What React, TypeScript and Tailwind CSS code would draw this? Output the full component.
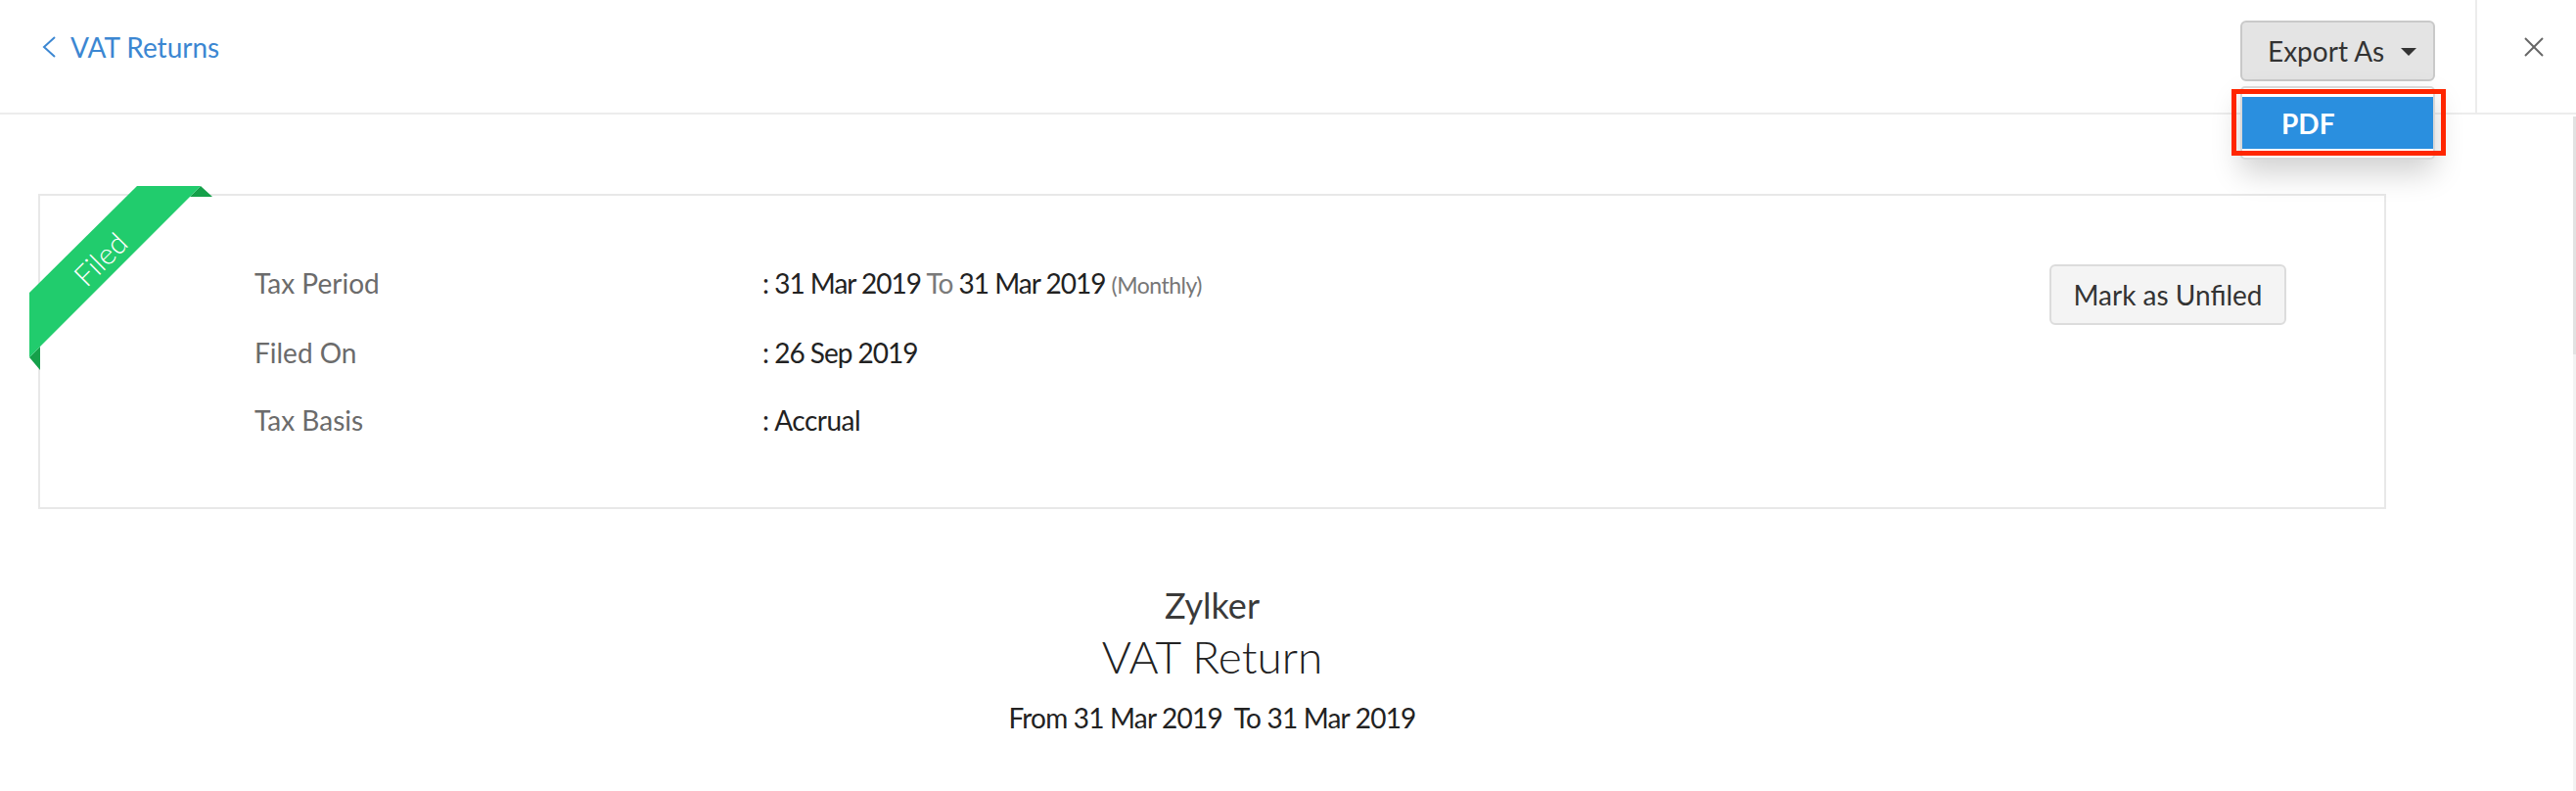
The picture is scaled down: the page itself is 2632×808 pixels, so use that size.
import React from "react";

function Ribbon() {
  return (
    <svg
      className="absolute left-[-11px] top-[-10px]"
      width="200"
      height="200"
      viewBox="0 0 200 200"
    >
      <polygon points="175,0 187,11 164,11" fill="#15a04a" />
      <polygon points="0,175 11,164 11,188" fill="#15a04a" />
      <polygon points="110,0 175,0 0,175 0,109" fill="#21cc6d" />
      <text
        x="72"
        y="74"
        fill="#ffffff"
        fontSize="30"
        fontWeight="300"
        fontFamily="Lato, 'Open Sans', sans-serif"
        textAnchor="middle"
        dominantBaseline="central"
        transform="rotate(-45 72 74)"
      >
        Filed
      </text>
    </svg>
  );
}

export default function App() {
  return (
    <div
      className="relative w-full min-h-[808px] bg-white text-[#222]"
      style={{ fontFamily: "Lato, 'Open Sans', 'Liberation Sans', sans-serif" }}
    >
      {/* Header */}
      <div className="flex h-[117px] items-start justify-between border-b-2 border-[#ececec]">
        <div className="mt-[17px] flex h-[62px] items-center pl-[43px] text-[28px] text-[#3c87d2]">
          <svg width="15" height="22" viewBox="0 0 15 22" className="mr-[14px]">
            <polyline
              points="13,1 2,11 13,21"
              fill="none"
              stroke="#3c87d2"
              strokeWidth="2"
            />
          </svg>
          <span className="leading-none">VAT Returns</span>
        </div>
        <div className="flex h-full items-start">
          <div className="relative mr-[41px] mt-[21px]">
            <button className="flex h-[62px] w-[199px] items-center rounded-[6px] border-2 border-[#c9c9c9] bg-[#e4e4e4] pl-[26px] text-[28px] text-[#333]">
              <span>Export As</span>
              <svg width="16" height="8" viewBox="0 0 16 8" className="ml-[17px] mt-[2px]">
                <polygon points="0,0 16,0 8,8" fill="#333" />
              </svg>
            </button>
            {/* Dropdown */}
            <div className="absolute left-0 top-[67px] z-10 h-[75px] w-[199px] rounded-[5px] border-2 border-[#d8d8d8] bg-white pt-[9px] shadow-[0_14px_30px_rgba(0,0,0,0.18)]">
              <div className="flex h-[53px] items-center bg-[#2a8fdf] pl-[40px] text-[28px] font-bold text-white">
                PDF
              </div>
            </div>
            <div className="absolute left-[-9px] top-[70px] z-20 h-[68px] w-[219px] border-[5px] border-[#ff2600]" />
          </div>
          <div className="h-full w-[103px] border-l-2 border-[#ececec] pl-[47px] pt-[37px]">
            <svg width="22" height="22" viewBox="0 0 22 22">
              <line x1="2" y1="2" x2="20" y2="20" stroke="#666" strokeWidth="2" />
              <line x1="20" y1="2" x2="2" y2="20" stroke="#666" strokeWidth="2" />
            </svg>
          </div>
        </div>
      </div>

      {/* Scrollbar hint */}
      <div className="absolute right-0 top-[119px] h-[243px] w-[3px] bg-[#e2e2e2]" />
      <div className="absolute right-0 top-[362px] h-[446px] w-[3px] bg-[#f2f2f2]" />

      {/* Card */}
      <div className="relative ml-[39px] mt-[81px] h-[322px] w-[2399px] border-2 border-[#e8e8e8]">
        <Ribbon />
        <div className="flex justify-between pl-[219px] pr-[100px] pt-[69px]">
          <div className="flex flex-col gap-[29px] text-[28px] leading-[40px]">
            <div className="flex">
              <div className="w-[519px] text-[#6b6b6b]">Tax Period</div>
              <div className="tracking-[-1px] text-[#222]">
                : 31 Mar 2019 <span className="text-[#7a7a7a]">To</span> 31 Mar 2019{" "}
                <span className="text-[23px] tracking-[-0.5px] text-[#777]">(Monthly)</span>
              </div>
            </div>
            <div className="flex">
              <div className="w-[519px] text-[#6b6b6b]">Filed On</div>
              <div className="tracking-[-1px]">: 26 Sep 2019</div>
            </div>
            <div className="flex">
              <div className="w-[519px] text-[#6b6b6b]">Tax Basis</div>
              <div className="tracking-[-0.5px]">: Accrual</div>
            </div>
          </div>
          <div className="pt-[1px]">
            <button className="h-[62px] w-[242px] rounded-[6px] border-2 border-[#dcdcdc] bg-[#f4f4f4] text-[28px] text-[#333]">
              Mark as Unfiled
            </button>
          </div>
        </div>
      </div>

      {/* Title block */}
      <div className="ml-[39px] w-[2399px] pt-[76px] text-center text-[#333]">
        <div className="text-[36px] leading-[44px] text-[#3a3a3a]">Zylker</div>
        <div className="mt-[3px] text-[46px] font-light leading-[56px] text-[#222]">VAT Return</div>
        <div className="mt-[14px] text-[28px] leading-[40px] tracking-[-0.8px] text-[#222]">
          From 31 Mar 2019&nbsp;&nbsp;To 31 Mar 2019
        </div>
      </div>
    </div>
  );
}
